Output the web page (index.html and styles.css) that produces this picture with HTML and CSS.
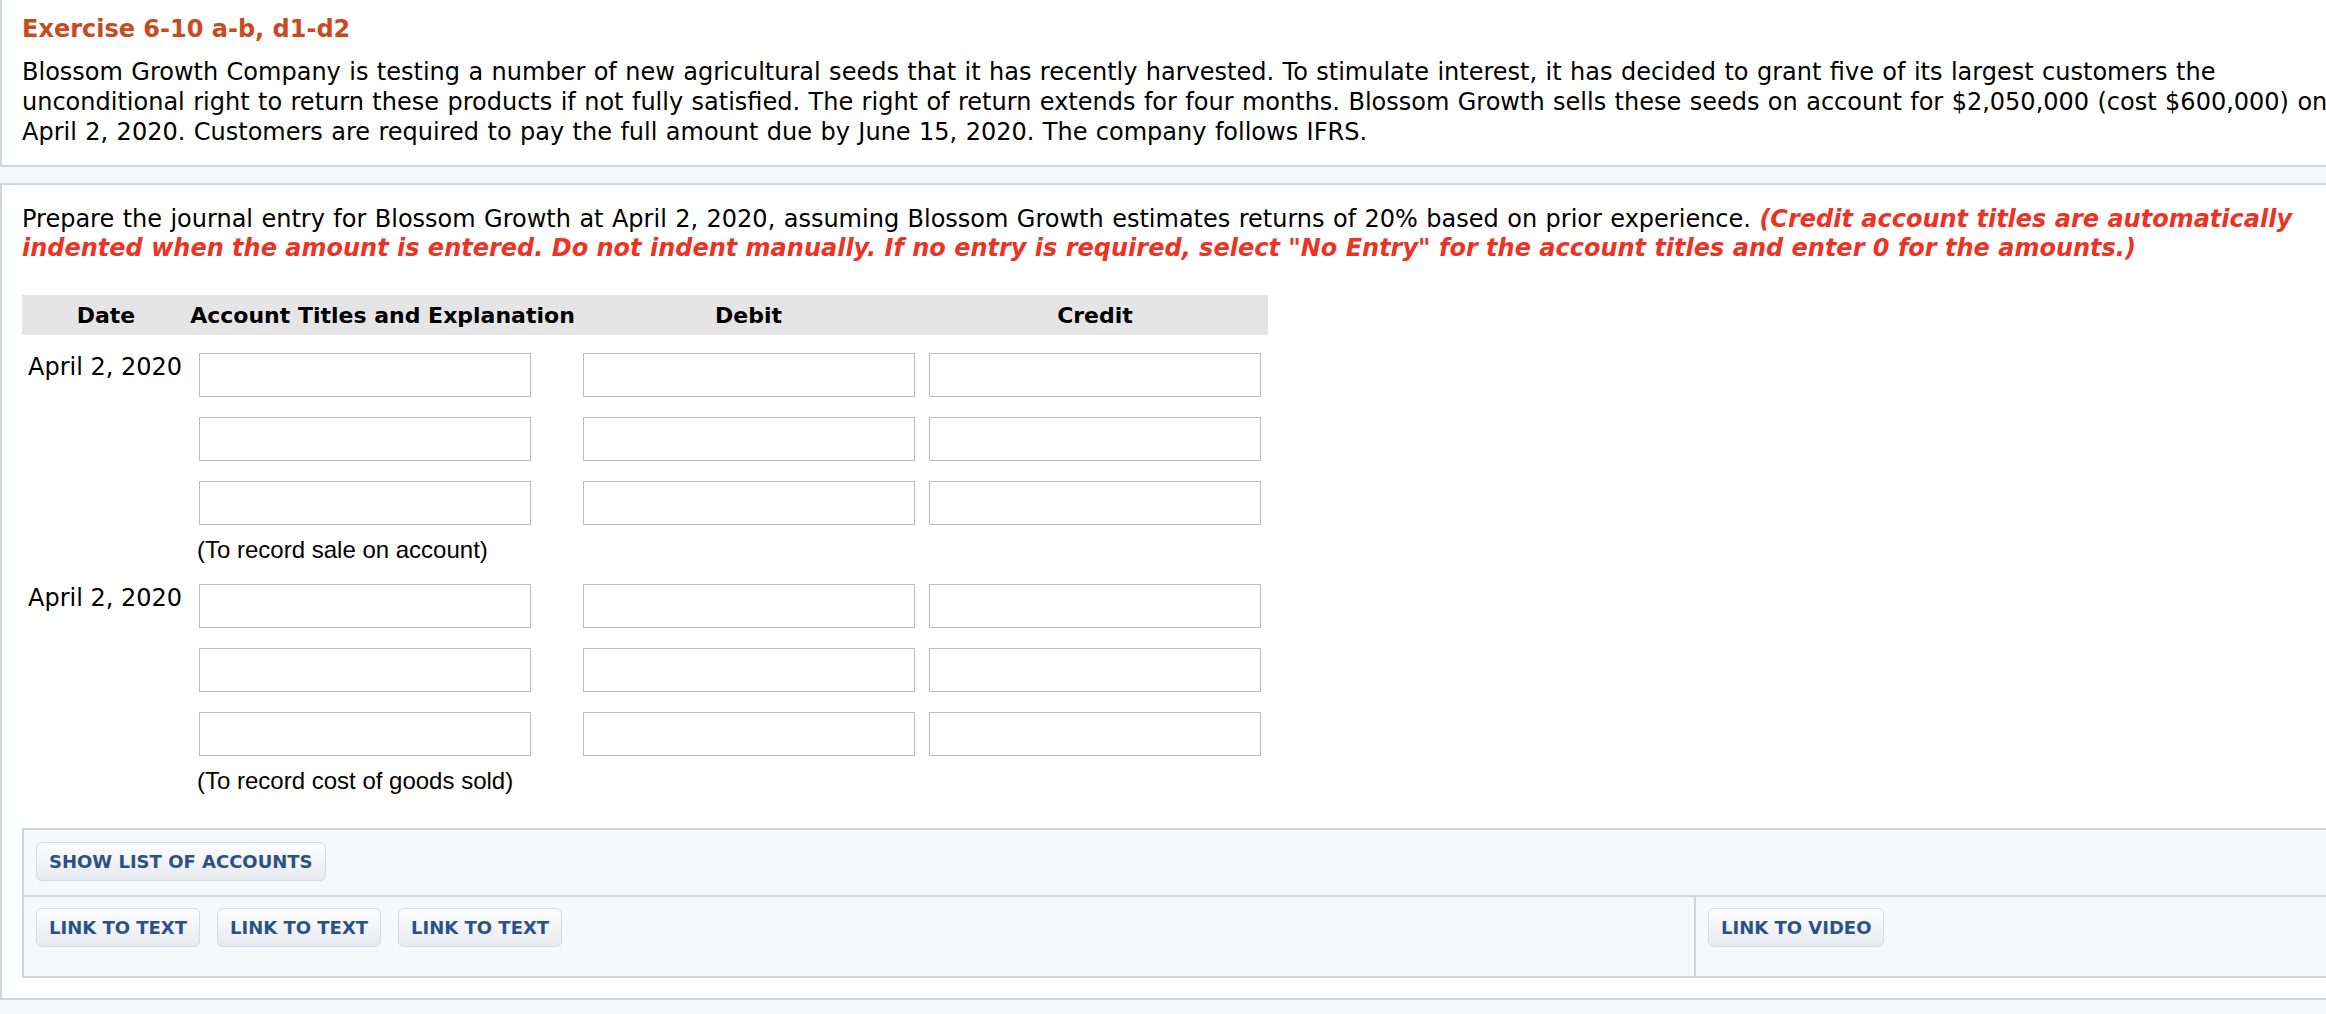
FILE: index.html
```html
<!DOCTYPE html>
<html lang="en">
<head>
  <meta charset="UTF-8" />
  <meta name="viewport" content="width=device-width, initial-scale=1.0" />
  <title>Exercise 6-10 a-b, d1-d2</title>
  <link rel="stylesheet" href="styles.css">
</head>
<body>
  <div class="panel question">
    <h2 class="ex-title">Exercise 6-10 a-b, d1-d2</h2>
    <p class="ex-text">Blossom Growth Company is testing a number of new agricultural seeds that it has recently harvested. To stimulate interest, it has decided to grant five of its largest customers the unconditional right to return these products if not fully satisfied. The right of return extends for four months. Blossom Growth sells these seeds on account for $2,050,000 (cost $600,000) on April 2, 2020. Customers are required to pay the full amount due by June 15, 2020. The company follows IFRS.</p>
  </div>

  <div class="panel part">
    <p class="instr">Prepare the journal entry for Blossom Growth at April 2, 2020, assuming Blossom Growth estimates returns of 20% based on prior experience. <em class="note">(Credit account titles are automatically indented when the amount is entered. Do not indent manually. If no entry is required, select "No Entry" for the account titles and enter 0 for the amounts.)</em></p>

    <table class="journal">
      <colgroup>
        <col class="c-date">
        <col class="c-acct">
        <col class="c-debit">
        <col class="c-credit">
      </colgroup>
      <thead>
        <tr>
          <th>Date</th>
          <th>Account Titles and Explanation</th>
          <th>Debit</th>
          <th>Credit</th>
        </tr>
      </thead>
      <tbody>
        <tr class="first">
          <td class="date">April 2, 2020</td>
          <td class="acct"><input type="text"></td>
          <td class="amt"><input type="text"></td>
          <td class="amt"><input type="text"></td>
        </tr>
        <tr>
          <td></td>
          <td class="acct"><input type="text"></td>
          <td class="amt"><input type="text"></td>
          <td class="amt"><input type="text"></td>
        </tr>
        <tr>
          <td></td>
          <td class="acct"><input type="text"></td>
          <td class="amt"><input type="text"></td>
          <td class="amt"><input type="text"></td>
        </tr>
        <tr class="memo-row">
          <td></td>
          <td class="memo" colspan="3">(To record sale on account)</td>
        </tr>
        <tr>
          <td class="date">April 2, 2020</td>
          <td class="acct"><input type="text"></td>
          <td class="amt"><input type="text"></td>
          <td class="amt"><input type="text"></td>
        </tr>
        <tr>
          <td></td>
          <td class="acct"><input type="text"></td>
          <td class="amt"><input type="text"></td>
          <td class="amt"><input type="text"></td>
        </tr>
        <tr>
          <td></td>
          <td class="acct"><input type="text"></td>
          <td class="amt"><input type="text"></td>
          <td class="amt"><input type="text"></td>
        </tr>
        <tr class="memo-row">
          <td></td>
          <td class="memo" colspan="3">(To record cost of goods sold)</td>
        </tr>
      </tbody>
    </table>

    <div class="toolbar">
      <div class="toolbar-top">
        <button class="btn" type="button">SHOW LIST OF ACCOUNTS</button>
      </div>
      <div class="toolbar-bottom">
        <div class="links">
          <button class="btn" type="button">LINK TO TEXT</button>
          <button class="btn" type="button">LINK TO TEXT</button>
          <button class="btn" type="button">LINK TO TEXT</button>
        </div>
        <div class="media">
          <button class="btn" type="button">LINK TO VIDEO</button>
        </div>
      </div>
    </div>
  </div>
</body>
</html>
```

FILE: styles.css
```css
html {
  overflow: hidden;
}
body {
  margin: 0;
  background: #f6f7f9;
  font-family: Verdana, "DejaVu Sans", sans-serif;
  font-size: 24px;
  color: #000;
}
.panel {
  width: 2333px;
  padding: 0 20px;
  background: white;
  border: 2px solid #cdd5df;
}
.question {
  border-top: none;
  padding-top: 15px;
  padding-bottom: 18px;
}
.part {
  margin-top: 16px;
  padding-top: 20px;
  padding-bottom: 20px;
}
.ex-title {
  margin: 0;
  font-size: 24px;
  line-height: 29px;
  color: #c84b1f;
}
.ex-text {
  margin: 13px 0 0;
  line-height: 30px;
  word-spacing: 0.8px;
}
.instr {
  margin: 0;
  line-height: 29px;
  word-spacing: 0.8px;
}
.note {
  font-weight: bold;
  color: #ec3324;
  word-spacing: 0;
}

/* journal entry grid */
.journal {
  margin-top: 32px;
  width: 1246px;
  table-layout: fixed;
  border-collapse: collapse;
}
.c-date { width: 168px; }
.c-acct { width: 385px; }
.c-debit { width: 347px; }
.c-credit { width: 346px; }
.journal th {
  height: 40px;
  padding: 0;
  background: #e5e5e5;
  font-size: 22px;
  text-align: center;
}
.journal td {
  padding: 10px 0;
  vertical-align: top;
  line-height: 29px;
}
.journal tr.first td {
  padding-top: 18px;
}
.journal td.date {
  padding-left: 6px;
  white-space: nowrap;
}
.journal input {
  display: block;
  box-sizing: border-box;
  width: 332px;
  height: 44px;
  margin: 0;
  border: 1px solid #bdbdbd;
  background: white;
  font-size: 20px;
}
.journal td.acct input {
  margin-left: 9px;
}
.journal td.amt input {
  margin: 0 auto;
}
.journal tr.memo-row td {
  padding: 0 0 10px;
}
.journal tr.memo-row td.memo {
  padding-left: 7px;
  font-family: "Liberation Sans", Arial, sans-serif;
}

/* bottom toolbar */
.toolbar {
  margin-top: 23px;
  background: #f6f8fa;
  border: 2px solid #cdd5df;
}
.toolbar-top {
  padding: 12px 12px 14px;
  border-bottom: 2px solid #cdd5df;
}
.toolbar-bottom {
  display: flex;
}
.links {
  flex: 0 0 1672px;
  box-sizing: border-box;
  display: flex;
  gap: 17px;
  align-items: flex-start;
  padding: 11px 12px 29px;
  border-right: 2px solid #cdd5df;
}
.media {
  padding: 11px 12px;
}
.btn {
  box-sizing: border-box;
  height: 39px;
  padding: 0 12px;
  border: 1px solid #d3dae3;
  border-radius: 6px;
  background: linear-gradient(#fdfdfe, #e6eaef);
  font-family: Verdana, "DejaVu Sans", sans-serif;
  font-size: 18px;
  font-weight: bold;
  color: #2c5189;
  cursor: pointer;
}
```
